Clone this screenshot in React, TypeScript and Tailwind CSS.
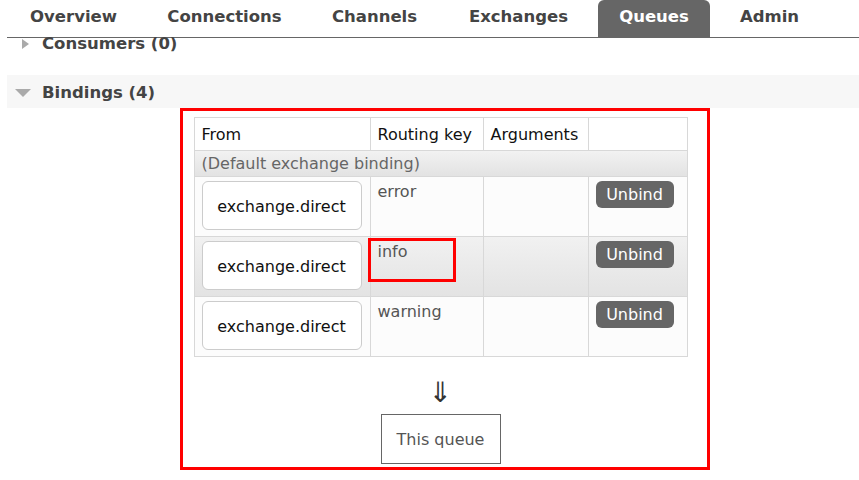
import React from "react";

const tabs = [
  { label: "Overview", width: "w-[131px]" },
  { label: "Connections", width: "w-[157px]" },
  { label: "Channels", width: "w-[129px]" },
  { label: "Exchanges", width: "w-[145px]" },
  { label: "Queues", width: "w-[112px]", active: true },
  { label: "Admin", width: "w-[105px]" },
];

const bindings = [
  { from: "exchange.direct", key: "error", shaded: false },
  { from: "exchange.direct", key: "info", shaded: true, marked: true },
  { from: "exchange.direct", key: "warning", shaded: false },
];

const App = () => {
  return (
    <div className="w-[859px] h-[480px] overflow-hidden bg-white font-['DejaVu_Sans',Verdana,sans-serif] text-[#444]">
      {/* Barra de pestañas */}
      <div className="ml-[7px] h-[38px] flex items-end gap-[7px] pl-px border-b border-[#666]">
        {tabs.map((tab) => (
          <div
            key={tab.label}
            className={`${tab.width} h-[37px] flex items-center justify-center text-[16.5px] font-bold leading-none pb-[3px] rounded-t-[6px] ${
              tab.active ? "bg-[#666] text-white" : "text-[#444]"
            }`}
          >
            {tab.label}
          </div>
        ))}
      </div>

      {/* Consumers */}
      <div className="h-[14px] flex items-center ml-[22px] -mt-[1px]">
        <span className="w-0 h-0 border-y-[5px] border-y-transparent border-l-[7px] border-l-[#aaa]" />
        <span className="ml-[13px] text-[16.5px] font-bold leading-none">Consumers (0)</span>
      </div>

      {/* Bindings */}
      <div className="mt-[24px] ml-[7px] h-[33px] bg-[#f7f7f7] flex items-center pt-[3px]">
        <span className="ml-[8px] w-0 h-0 border-x-[8px] border-x-transparent border-t-[8px] border-t-[#aaa]" />
        <span className="ml-[11px] text-[16.5px] font-bold leading-none">Bindings (4)</span>
      </div>

      <div className="ml-[180px] w-[530px] h-[362px] border-[3px] border-[#ff0000] pl-[11px] pt-[6px]">
        <div className="w-[493px] flex flex-col items-center">
          <table className="w-[493px] border-collapse text-[16px] table-fixed">
            <colgroup>
              <col className="w-[176px]" />
              <col className="w-[113px]" />
              <col className="w-[105px]" />
              <col className="w-[99px]" />
            </colgroup>
            <thead>
              <tr className="bg-white text-[#111]">
                <th className="h-[33px] border border-[#d8d8d8] px-[7px] pt-[2px] text-left font-normal">From</th>
                <th className="h-[33px] border border-[#d8d8d8] px-[7px] pt-[2px] text-left font-normal">Routing key</th>
                <th className="h-[33px] border border-[#d8d8d8] px-[7px] pt-[2px] text-left font-normal">Arguments</th>
                <th className="h-[33px] border border-[#d8d8d8]" />
              </tr>
            </thead>
            <tbody>
              <tr className="bg-gradient-to-b from-[#f2f2f2] to-[#e2e2e2]">
                <td colSpan={4} className="h-[26px] border border-[#d8d8d8] px-[7px] pt-[1px] text-[#666] leading-none">
                  (Default exchange binding)
                </td>
              </tr>
              {bindings.map((b) => (
                <tr
                  key={b.key}
                  className={b.shaded ? "bg-gradient-to-b from-[#f1f1f1] to-[#e3e3e3]" : "bg-[#fcfcfc]"}
                >
                  <td className="h-[60px] border border-[#d8d8d8] px-[7px] py-[4px] align-top">
                    <div className="w-[160px] h-[49px] bg-white border border-[#ccc] rounded-[6px] flex items-center justify-center text-[#111] pt-[2px]">
                      {b.from}
                    </div>
                  </td>
                  <td className="relative h-[60px] border border-[#d8d8d8] px-[7px] pt-[3px] align-top text-[#555]">
                    {b.key}
                    {b.marked && (
                      <div className="absolute left-[-3px] top-[1px] w-[88px] h-[44px] border-[3px] border-[#ff0000]" />
                    )}
                  </td>
                  <td className="h-[60px] border border-[#d8d8d8]" />
                  <td className="h-[60px] border border-[#d8d8d8] px-[7px] pt-[4px] align-top">
                    <div className="w-[78px] h-[27px] bg-[#666] rounded-[6px] text-white flex items-center justify-center leading-none">
                      Unbind
                    </div>
                  </td>
                </tr>
              ))}
            </tbody>
          </table>

          <div className="mt-[18px] text-[28px] leading-[36px] text-[#333]">⇓</div>
          <div className="mt-[3px] w-[120px] h-[50px] border border-[#666] flex items-center justify-center text-[16px] text-[#555] pt-[2px]">
            This queue
          </div>
        </div>
      </div>
    </div>
  );
};

export default App;
